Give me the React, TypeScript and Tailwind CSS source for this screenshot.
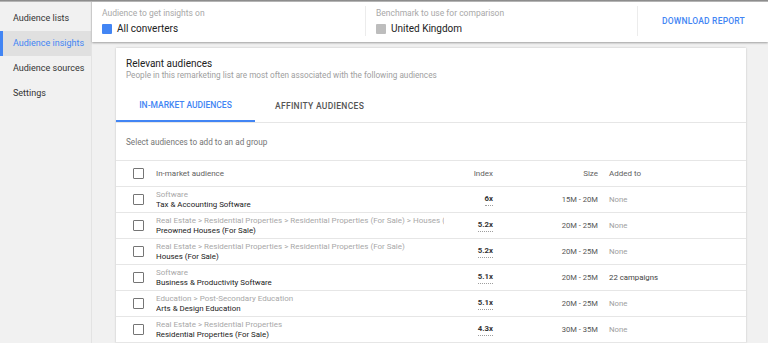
import React from 'react';

type Row = {
  category: string;
  name: string;
  index: string;
  size: string;
  added: string;
};

const rows: Row[] = [
  { category: 'Software', name: 'Tax & Accounting Software', index: '6x', size: '15M - 20M', added: 'None' },
  {
    category: 'Real Estate > Residential Properties > Residential Properties (For Sale) > Houses (For Sale)',
    name: 'Preowned Houses (For Sale)',
    index: '5.2x',
    size: '20M - 25M',
    added: 'None',
  },
  {
    category: 'Real Estate > Residential Properties > Residential Properties (For Sale)',
    name: 'Houses (For Sale)',
    index: '5.2x',
    size: '20M - 25M',
    added: 'None',
  },
  { category: 'Software', name: 'Business & Productivity Software', index: '5.1x', size: '20M - 25M', added: '22 campaigns' },
  { category: 'Education > Post-Secondary Education', name: 'Arts & Design Education', index: '5.1x', size: '20M - 25M', added: 'None' },
  { category: 'Real Estate > Residential Properties', name: 'Residential Properties (For Sale)', index: '4.3x', size: '30M - 35M', added: 'None' },
];

const navItems = ['Audience lists', 'Audience insights', 'Audience sources', 'Settings'];

const Checkbox = () => <div className="w-[11px] h-[11px] border-[1.5px] border-[#757575] rounded-[1px]" />;

export default function App() {
  return (
    <div className="relative h-[343px] w-[768px] overflow-hidden bg-[#f1f1f1] text-[#212121] font-['Roboto',sans-serif]">
      {/* top edge shadow */}
      <div className="absolute top-0 left-0 right-0 h-[2px] bg-gradient-to-b from-[#7a7a7a] to-[#c8c8c8] z-20" />

      <div className="flex h-full">
        {/* sidebar */}
        <aside className="w-[92px] shrink-0 border-r border-[#e3e3e3] pt-[6px]">
          {navItems.map((item) => {
            const active = item === 'Audience insights';
            return (
              <div
                key={item}
                className={
                  active
                    ? 'h-[25px] flex items-center pl-[10px] text-[9px] bg-[#e0e0e0] text-[#4285f4] border-l-[3px] border-[#4285f4]'
                    : 'h-[25px] flex items-center pl-[13px] text-[9px] text-[#333]'
                }
              >
                {item}
              </div>
            );
          })}
        </aside>

        <main className="flex-1 flex flex-col min-w-0">
          {/* header */}
          <header className="relative z-10 h-[42px] shrink-0 bg-white flex shadow-[0_1px_2px_rgba(0,0,0,0.35)]">
            <div className="w-[273px] pl-[10px] pt-[8px]">
              <div className="text-[8.5px] text-[#a8a8a8] leading-[10px]">Audience to get insights on</div>
              <div className="flex items-center gap-[5px] mt-[3px]">
                <span className="w-[10px] h-[10px] bg-[#4285f4] rounded-[1px]" />
                <span className="text-[10px] text-[#212121]">All converters</span>
              </div>
            </div>
            <div className="w-px my-[6px] bg-[#ececec]" />
            <div className="w-[271px] pl-[10px] pt-[8px]">
              <div className="text-[8.5px] text-[#a8a8a8] leading-[10px]">Benchmark to use for comparison</div>
              <div className="flex items-center gap-[5px] mt-[3px]">
                <span className="w-[10px] h-[10px] bg-[#bdbdbd] rounded-[1px]" />
                <span className="text-[10px] text-[#212121]">United Kingdom</span>
              </div>
            </div>
            <div className="w-px my-[6px] bg-[#ececec]" />
            <div className="flex-1 flex items-center pl-[24px] pt-[1px]">
              <span className="text-[8.5px] font-medium tracking-[0.2px] text-[#4285f4]">DOWNLOAD REPORT</span>
            </div>
          </header>

          {/* content */}
          <div className="flex-1 pl-[24px] pr-[22px] pt-[6px]">
            <section className="bg-white shadow-[0_0_2px_rgba(0,0,0,0.2)]">
              <div className="px-[10px] pt-[9px]">
                <h2 className="text-[10px] leading-[13px] text-[#212121]">Relevant audiences</h2>
                <p className="text-[8.2px] leading-[10px] text-[#9e9e9e]">
                  People in this remarketing list are most often associated with the following audiences
                </p>
              </div>

              <div className="flex mt-[10px] border-b border-[#e6e6e6]">
                <div className="w-[139px] h-[32px] flex items-center justify-center text-[8.5px] font-medium text-[#4285f4] border-b-2 border-[#4285f4] -mb-px">
                  IN-MARKET AUDIENCES
                </div>
                <div className="h-[32px] flex items-center px-[20px] text-[8.5px] tracking-[0.3px] font-medium text-[#555]">
                  AFFINITY AUDIENCES
                </div>
              </div>

              <div className="h-[38px] flex items-center px-[10px] pt-[1px] text-[8.2px] text-[#757575] border-b border-[#e6e6e6]">
                Select audiences to add to an ad group
              </div>

              <div className="grid grid-cols-[40px_288px_49px_105px_148px] h-[26px] items-center border-b border-[#e6e6e6] text-[8px] text-[#616161]">
                <div className="flex justify-center pl-[4px]">
                  <Checkbox />
                </div>
                <div>In-market audience</div>
                <div className="text-right">Index</div>
                <div className="text-right">Size</div>
                <div className="pl-[11px]">Added to</div>
              </div>

              {rows.map((r) => (
                <div
                  key={r.name}
                  className="grid grid-cols-[40px_288px_49px_105px_148px] h-[26px] items-center border-b border-[#e6e6e6]"
                >
                  <div className="flex justify-center pl-[4px]">
                    <Checkbox />
                  </div>
                  <div className="min-w-0 overflow-hidden whitespace-nowrap leading-[10px]">
                    <div className="text-[8px] text-[#a8a8a8]">{r.category}</div>
                    <div className="text-[7.9px] text-[#212121]">{r.name}</div>
                  </div>
                  <div className="flex justify-end">
                    <span className="inline-block leading-[10px] text-[7.8px] font-bold text-[#333] border-b border-dotted border-[#9e9e9e] pb-[1px]">
                      {r.index}
                    </span>
                  </div>
                  <div className="text-right text-[7.6px] text-[#555]">{r.size}</div>
                  <div className={`pl-[11px] text-[7.8px] ${r.added === 'None' ? 'text-[#9e9e9e]' : 'text-[#424242]'}`}>
                    {r.added}
                  </div>
                </div>
              ))}
            </section>
          </div>
        </main>
      </div>
    </div>
  );
}
